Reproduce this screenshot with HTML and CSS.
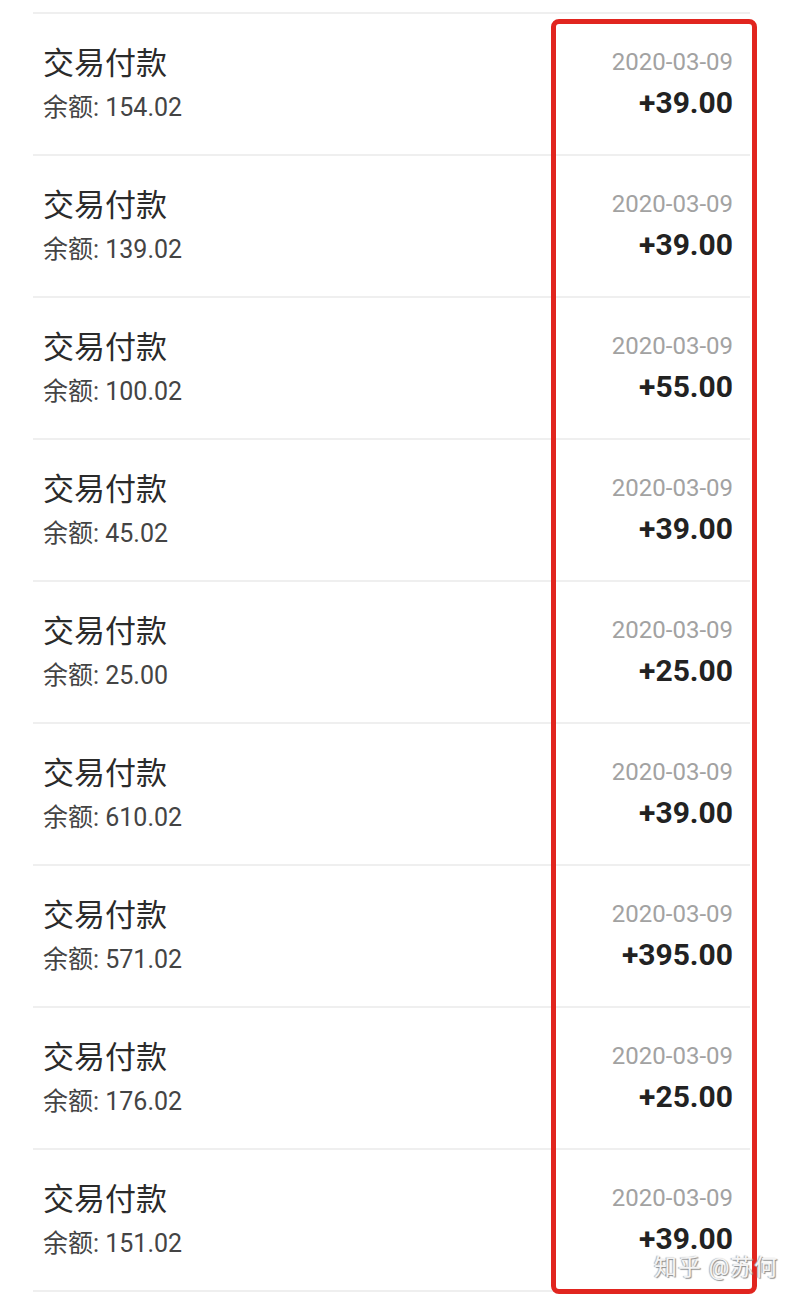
FILE: index.html
```html
<!DOCTYPE html>
<html>
<head>
  <meta charset="UTF-8">
  <title>交易记录</title>
  <link rel="stylesheet" href="styles.css">
</head>
<body>
  <div class="page">

    <!-- transaction list -->
    <div class="list">
      <div class="row">
        <div class="info"><div class="title">交易付款</div><div class="balance">余额: 154.02</div></div>
        <div class="meta"><div class="date">2020-03-09</div><div class="amount">+39.00</div></div>
      </div>
      <div class="row">
        <div class="info"><div class="title">交易付款</div><div class="balance">余额: 139.02</div></div>
        <div class="meta"><div class="date">2020-03-09</div><div class="amount">+39.00</div></div>
      </div>
      <div class="row">
        <div class="info"><div class="title">交易付款</div><div class="balance">余额: 100.02</div></div>
        <div class="meta"><div class="date">2020-03-09</div><div class="amount">+55.00</div></div>
      </div>
      <div class="row">
        <div class="info"><div class="title">交易付款</div><div class="balance">余额: 45.02</div></div>
        <div class="meta"><div class="date">2020-03-09</div><div class="amount">+39.00</div></div>
      </div>
      <div class="row">
        <div class="info"><div class="title">交易付款</div><div class="balance">余额: 25.00</div></div>
        <div class="meta"><div class="date">2020-03-09</div><div class="amount">+25.00</div></div>
      </div>
      <div class="row">
        <div class="info"><div class="title">交易付款</div><div class="balance">余额: 610.02</div></div>
        <div class="meta"><div class="date">2020-03-09</div><div class="amount">+39.00</div></div>
      </div>
      <div class="row">
        <div class="info"><div class="title">交易付款</div><div class="balance">余额: 571.02</div></div>
        <div class="meta"><div class="date">2020-03-09</div><div class="amount">+395.00</div></div>
      </div>
      <div class="row">
        <div class="info"><div class="title">交易付款</div><div class="balance">余额: 176.02</div></div>
        <div class="meta"><div class="date">2020-03-09</div><div class="amount">+25.00</div></div>
      </div>
      <div class="row">
        <div class="info"><div class="title">交易付款</div><div class="balance">余额: 151.02</div></div>
        <div class="meta"><div class="date">2020-03-09</div><div class="amount">+39.00</div></div>
      </div>
    </div>

    <!-- red highlight box drawn over the amounts -->
    <div class="highlight"></div>

    <div class="watermark">知乎 @苏何</div>
  </div>
</body>
</html>
```

FILE: styles.css
```css
body {
  margin: 0;
  background: #fff;
  font-family: Roboto, "Noto Sans CJK SC", sans-serif;
}

.page {
  position: relative;
  width: 800px;
  height: 1300px;
  overflow: hidden;
}

.list {
  margin: 12px 50px 0 33px;
  border-bottom: 2px solid #efefef;
}

.row {
  height: 142px;
  box-sizing: border-box;
  border-top: 2px solid #efefef;
  display: flex;
  justify-content: space-between;
  align-items: flex-start;
  padding: 0 17px 0 10px;
}

.info {
  padding-top: 32px;
}

.title {
  font-size: 31px;
  line-height: 36px;
  color: #2b2b2b;
}

.balance {
  margin-top: 11px;
  font-size: 25px;
  line-height: 29px;
  color: #444;
}

.meta {
  padding-top: 34px;
  text-align: right;
}

.date {
  font-size: 24px;
  line-height: 28px;
  color: #a2a2a2;
}

.amount {
  margin-top: 10px;
  font-size: 30px;
  line-height: 34px;
  font-weight: 700;
  color: #222;
}

.highlight {
  position: absolute;
  left: 551px;
  top: 19px;
  width: 206px;
  height: 1275px;
  box-sizing: border-box;
  border: 5px solid #e1251f;
  border-radius: 8px;
}

.watermark {
  position: absolute;
  left: 654px;
  top: 1254px;
  font-size: 23px;
  line-height: 28px;
  color: #f4f4f4;
  letter-spacing: 1px;
  text-shadow: 1px 1px 1px #8c8c8c, -1px 0 1px #b0b0b0;
}
```
